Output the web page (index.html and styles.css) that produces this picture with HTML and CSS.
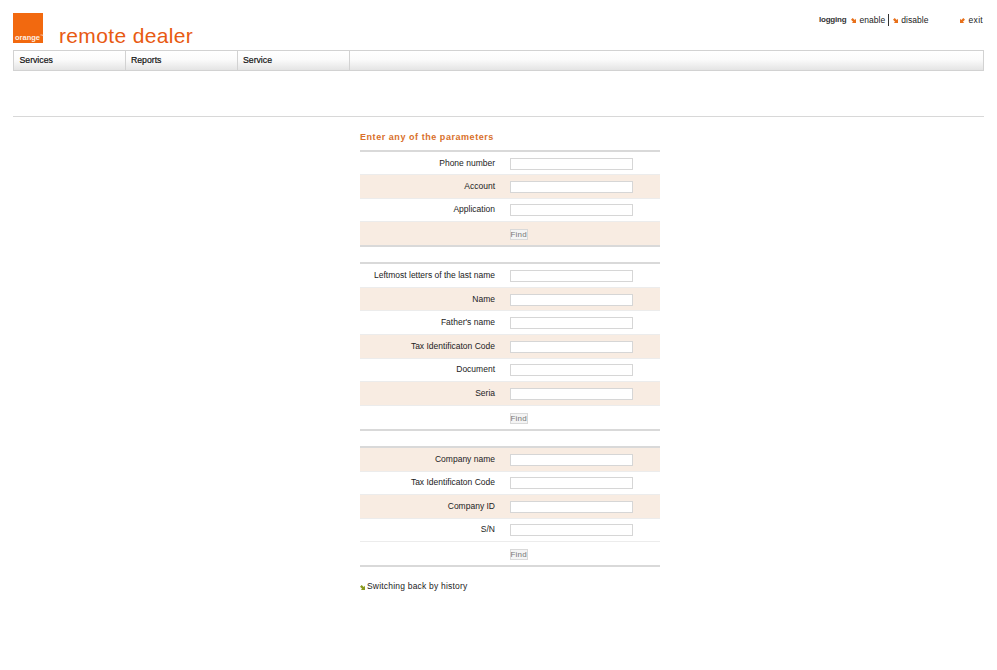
FILE: index.html
```html
<!DOCTYPE html>
<html lang="en">
<head>
<meta charset="utf-8">
<title>remote dealer</title>
<link rel="stylesheet" href="styles.css">
</head>
<body>
<header class="top">
  <div class="brand">
    <div class="logo"><span class="logo-text">orange<span class="tm">™</span></span></div>
    <div class="title">remote dealer</div>
  </div>
  <div class="tools">
    <span class="tool-label">logging</span>
    <a class="tool t-enable"><svg class="arrow" viewBox="0 0 6 6"><path d="M6 6H1L2.5 4.5 0 2 2 0 4.5 2.5 6 1z" fill="#e8701a"/></svg>enable</a>
    <span class="sep"></span>
    <a class="tool t-disable"><svg class="arrow" viewBox="0 0 6 6"><path d="M6 6H1L2.5 4.5 0 2 2 0 4.5 2.5 6 1z" fill="#e8701a"/></svg>disable</a>
    <a class="tool t-exit"><svg class="arrow" viewBox="0 0 6 6"><path d="M0 6H5L3.5 4.5 6 2 4 0 1.5 2.5 0 1z" fill="#e8701a"/></svg>exit</a>
  </div>
</header>
<nav class="menu">
  <div class="menu-item">Services</div>
  <div class="menu-item">Reports</div>
  <div class="menu-item">Service</div>
  <div class="menu-rest"></div>
</nav>
<hr class="rule">
<main class="content">
  <h1 class="heading">Enter any of the parameters</h1>
  <section class="group g-a">
    <div class="row"><label class="lab">Phone number</label><input class="field"></div>
    <div class="row tint"><label class="lab">Account</label><input class="field"></div>
    <div class="row"><label class="lab">Application</label><input class="field"></div>
    <div class="row tint"><span class="lab"></span><button class="find">Find</button></div>
  </section>
  <section class="group g-b">
    <div class="row"><label class="lab">Leftmost letters of the last name</label><input class="field"></div>
    <div class="row tint"><label class="lab">Name</label><input class="field"></div>
    <div class="row"><label class="lab">Father's name</label><input class="field"></div>
    <div class="row tint"><label class="lab">Tax Identificaton Code</label><input class="field"></div>
    <div class="row"><label class="lab">Document</label><input class="field"></div>
    <div class="row tint"><label class="lab">Seria</label><input class="field"></div>
    <div class="row"><span class="lab"></span><button class="find">Find</button></div>
  </section>
  <section class="group g-c">
    <div class="row tint"><label class="lab">Company name</label><input class="field"></div>
    <div class="row"><label class="lab">Tax Identificaton Code</label><input class="field"></div>
    <div class="row tint"><label class="lab">Company ID</label><input class="field"></div>
    <div class="row"><label class="lab">S/N</label><input class="field"></div>
    <div class="row"><span class="lab"></span><button class="find">Find</button></div>
  </section>
  <a class="history"><svg class="arrow" viewBox="0 0 6 6"><path d="M6 6H1L2.5 4.5 0 2 2 0 4.5 2.5 6 1z" fill="#8a9a1e"/></svg>Switching back by history</a>
</main>
</body>
</html>
```
FILE: styles.css
```css
* { box-sizing: border-box; }
html, body { margin: 0; padding: 0; background: #fff; }
body {
  font-family: "Liberation Sans", Arial, sans-serif;
  font-size: 8.5px;
  color: #222;
  height: 670px;
  overflow: hidden;
}
.top {
  display: flex;
  justify-content: space-between;
  align-items: flex-start;
  height: 50px;
  padding: 13px 13px 0;
}
.brand { display: flex; align-items: flex-end; height: 30px; }
.logo {
  width: 30px;
  height: 30px;
  background: #f2690f;
  display: flex;
  align-items: flex-end;
  padding: 0 0 1px 2px;
}
.logo-text { color: #fdeee2; font-size: 7.5px; font-weight: 700; line-height: 9px; white-space: nowrap; }
.tm { font-size: 4px; font-weight: 400; vertical-align: 3px; }
.title {
  margin-left: 16px;
  color: #e85a12;
  font-size: 21px;
  line-height: 24px;
  letter-spacing: 0.35px;
  position: relative;
  top: 5px;
  white-space: nowrap;
}
.tools {
  display: flex;
  align-items: center;
  height: 13px;
  margin-right: 1px;
  color: #222;
  font-size: 8.5px;
  letter-spacing: 0.05px;
}
.tool-label { font-weight: 700; font-size: 8px; letter-spacing: -0.2px; color: #333; margin-right: 5px; }
.tool { display: flex; align-items: center; white-space: nowrap; }
.arrow { width: 5px; height: 5px; margin-right: 3px; flex: none; position: relative; top: 1px; }
.sep { width: 1px; height: 12px; background: #333; margin: 0 4px 0 3px; }
.t-exit { margin-left: 31px; letter-spacing: 0.3px; }
.t-exit .arrow { margin-right: 4px; }
.menu {
  display: flex;
  height: 21px;
  margin: 0 13px;
  border: 1px solid #d2d2d2;
  background: linear-gradient(#fff 0%, #fbfbfb 45%, #e4e4e4 100%);
}
.menu-item {
  width: 112px;
  flex: none;
  border-right: 1px solid #d2d2d2;
  padding-left: 5.5px;
  font-size: 8.7px;
  line-height: 18px;
  color: #111;
  -webkit-text-stroke: 0.2px #111;
}
.menu-item:first-child { width: 111.5px; }
.menu-rest { flex: 1; }
.rule {
  height: 1px;
  margin: 45px 13px 0;
  border: 0;
  background: #d8d8d8;
}
.content { width: 300px; margin: 0 0 0 360px; }
.heading {
  margin: 14px 0 0;
  height: 19px;
  font-size: 9px;
  line-height: 13px;
  font-weight: 700;
  letter-spacing: 0.55px;
  color: #d9702a;
}
.group {
  border-top: 2px solid #d9d9d9;
  border-bottom: 2px solid #d9d9d9;
}
.g-b, .g-c { margin-top: 15px; }
.row {
  display: flex;
  align-items: center;
  padding-top: 1px;
  border-bottom: 1px solid #ececec;
  font-size: 8.5px;
}
.row:last-child { border-bottom: 0; }
.g-a .row { height: 23.3px; }
.g-b .row { height: 23.6px; }
.g-c .row { height: 23.4px; }
.tint { background: #f8ece2; }
.lab {
  width: 135px;
  flex: none;
  text-align: right;
  color: #222;
  position: relative;
  top: -1px;
}
.field {
  width: 123px;
  height: 12px;
  margin: 0 0 0 15px;
  padding: 0;
  border: 1px solid #d6d6d6;
  background: #fff;
}
.find {
  width: 18px;
  height: 11px;
  margin: 0 0 0 14.5px;
  padding: 0;
  border: 1px solid #d9d9d9;
  background: #f4f4f4;
  color: #777;
  font: 8px/9px "Liberation Sans", Arial, sans-serif;
  letter-spacing: 0.2px;
}
.history {
  display: flex;
  align-items: center;
  margin-top: 14px;
  font-size: 8.5px;
  line-height: 11px;
  letter-spacing: 0.2px;
  color: #222;
}
.history .arrow { margin-right: 2px; }
```
